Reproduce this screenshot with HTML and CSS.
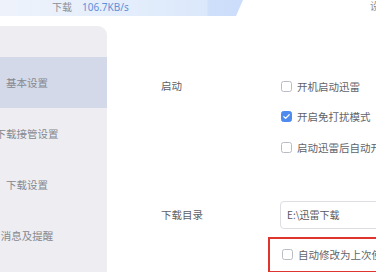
FILE: index.html
```html
<!DOCTYPE html>
<html lang="zh">
<head>
<meta charset="utf-8">
<link rel="stylesheet" href="styles.css">
</head>
<body>
<div class="page">
  <header class="topbar">
    <div class="speed-band">
      <span class="speed-label">下载</span>
      <span class="speed-value">106.7KB/s</span>
    </div>
    <span class="top-right">设置</span>
  </header>
  <div class="main">
    <nav class="sidebar">
      <div class="nav-item active">基本设置</div>
      <div class="nav-item">下载接管设置</div>
      <div class="nav-item">下载设置</div>
      <div class="nav-item">消息及提醒</div>
    </nav>
    <section class="content">
      <div class="group startup">
        <div class="group-label">启动</div>
        <div class="options">
          <label class="option"><span class="box"></span>开机启动迅雷</label>
          <label class="option"><span class="box checked"><svg viewBox="0 0 11 11" width="11" height="11"><path d="M2.8 5.6 L4.6 7.4 L8.2 3.8" fill="none" stroke="#fff" stroke-width="1.3" stroke-linecap="round" stroke-linejoin="round"/></svg></span>开启免打扰模式</label>
          <label class="option"><span class="box"></span>启动迅雷后自动开始未完成的任务</label>
        </div>
      </div>
      <div class="group directory">
        <div class="group-label">下载目录</div>
        <div class="options">
          <div class="path-input">E:\迅雷下载</div>
          <label class="option highlighted"><span class="box"></span>自动修改为上次使用的目录</label>
        </div>
      </div>
    </section>
  </div>
</div>
</body>
</html>
```

FILE: styles.css
```css
* { box-sizing: border-box; margin: 0; padding: 0; }
html, body {
  width: 376px;
  height: 272px;
  overflow: hidden;
  background: #ffffff;
  font-family: "Noto Sans CJK SC", "Noto Sans", sans-serif;
}
.page {
  width: 376px;
  height: 272px;
  display: flex;
  flex-direction: column;
}
.topbar {
  height: 16px;
  display: flex;
  align-items: flex-start;
  justify-content: space-between;
  flex: none;
}
.speed-band {
  width: 243px;
  height: 16px;
  display: flex;
  align-items: center;
  padding-left: 52px;
  gap: 10px;
  background: linear-gradient(90deg, #eef3fb 0%, #e3edfb 55%, #dbe8fb 85%, #cddffa 86%, #cbddfa 100%);
  clip-path: polygon(0 0, 100% 0, calc(100% - 7px) 100%, 0 100%);
  font-size: 10px;
  line-height: 12px;
  padding-bottom: 3px;
}
.speed-label { color: #8a8f98; }
.speed-value { color: #5f8fd8; font-family: "Noto Sans", sans-serif; }
.top-right {
  width: 6px;
  overflow: hidden;
  white-space: nowrap;
  font-size: 10px;
  line-height: 12px;
  color: #8a8a8a;
  margin-top: 0px;
}
.main {
  flex: 1;
  display: flex;
  margin-top: 10px;
}
.sidebar {
  width: 160px;
  margin-left: -53px;
  flex: none;
  background: #ededf2;
  border-top-right-radius: 9px;
  padding-top: 31px;
  display: flex;
  flex-direction: column;
}
.nav-item {
  height: 51px;
  display: flex;
  align-items: center;
  justify-content: center;
  font-size: 10.5px;
  color: #858890;
  white-space: nowrap;
}
.nav-item.active {
  background: #d3d9e9;
}
.content {
  flex: 1;
  padding-top: 45px;
  min-width: 0;
}
.group {
  display: flex;
}
.group-label {
  width: 174px;
  padding-left: 54px;
  font-size: 10.5px;
  line-height: 30px;
  color: #5c5f66;
  flex: none;
}
.options {
  display: flex;
  flex-direction: column;
  min-width: 0;
}
.option {
  height: 30.5px;
  display: flex;
  align-items: center;
  gap: 5px;
  font-size: 10.5px;
  color: #60636a;
  white-space: nowrap;
}
.box {
  width: 11px;
  height: 11px;
  border: 1px solid #b9bcc2;
  border-radius: 2.5px;
  background: #fff;
  flex: none;
  display: flex;
}
.box.checked {
  background: #4f8bee;
  border-color: #4f8bee;
}
.box.checked svg { margin: -1px; }
.directory {
  margin-top: 38px;
}
.directory .group-label {
  line-height: 28px;
}
.path-input {
  width: 200px;
  height: 28px;
  margin-left: -1px;
  border: 1px solid #dcdee3;
  border-radius: 4px;
  padding-left: 6px;
  display: flex;
  align-items: center;
  font-size: 10px;
  color: #555860;
}
.highlighted {
  margin-top: 8px;
  margin-left: -13px;
  padding-left: 13px;
  height: 36px;
  width: 200px;
  border: 2px solid #e0352e;
  padding-left: 12px;
}
```
